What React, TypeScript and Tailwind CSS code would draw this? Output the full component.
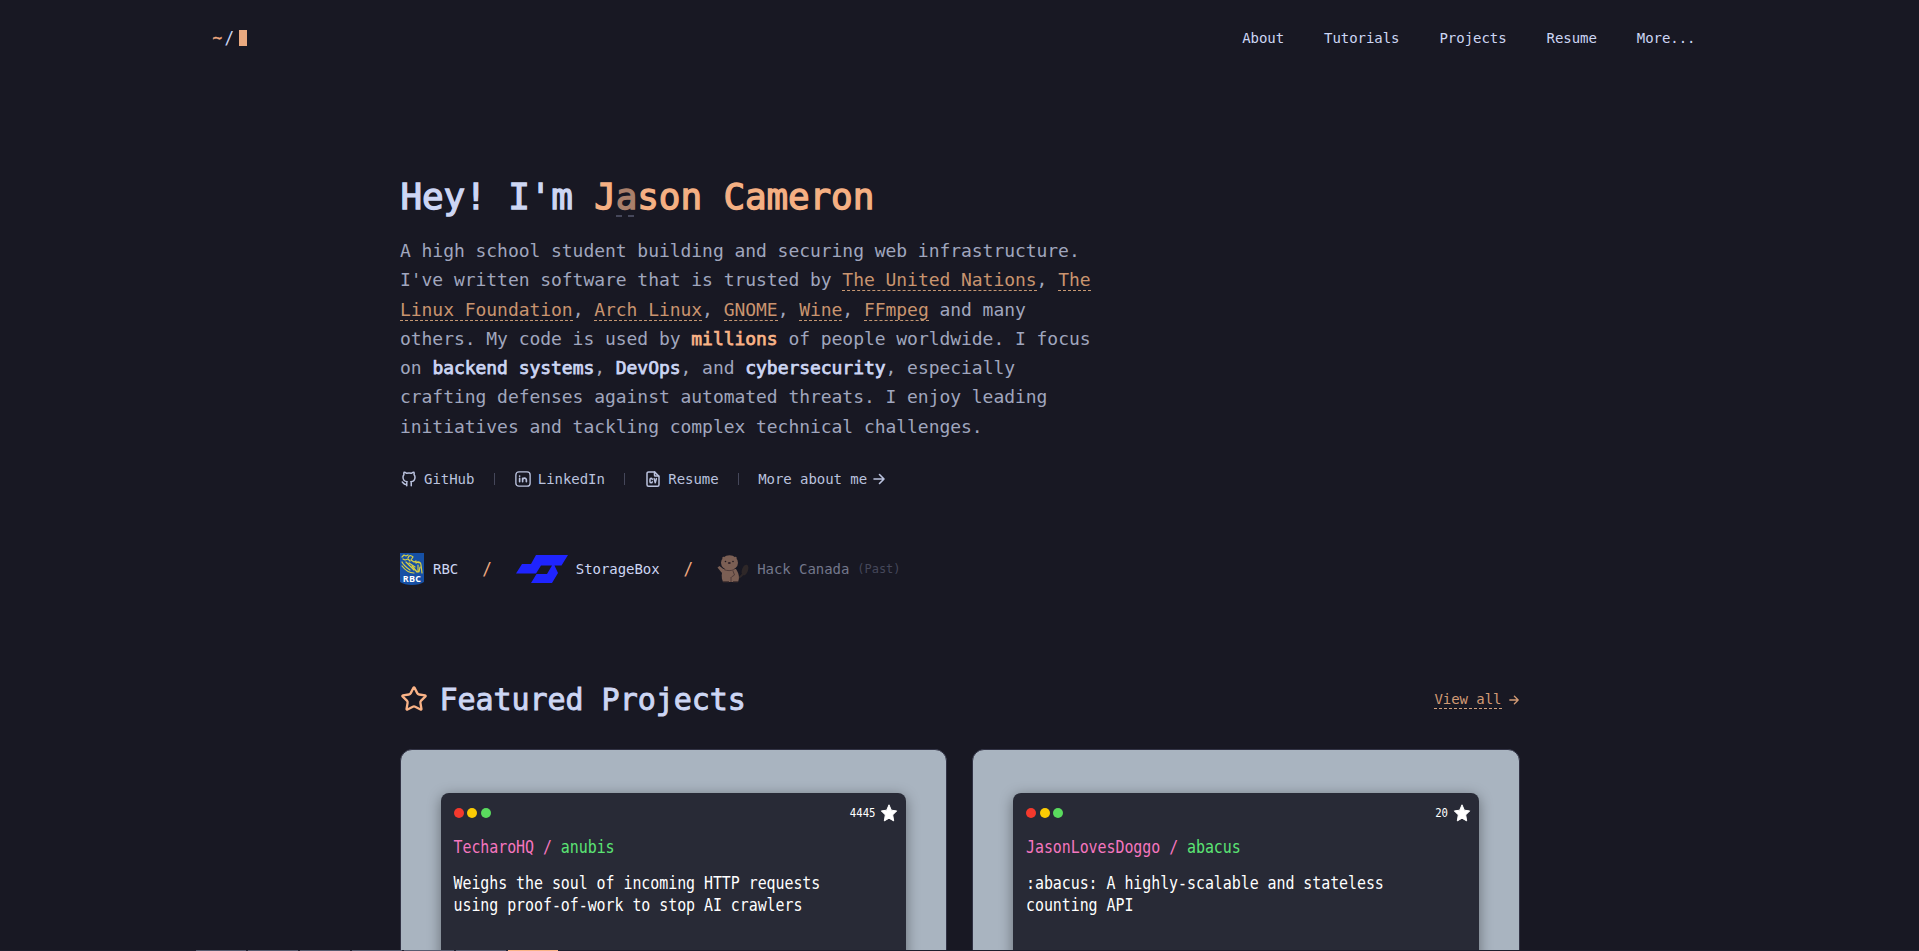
import React from "react";
import { Star } from "lucide-react";
import { TbBrandGithub } from "react-icons/tb";

const stroke = {
  viewBox: "0 0 24 24",
  fill: "none",
  stroke: "currentColor",
  strokeLinecap: "round" as const,
  strokeLinejoin: "round" as const,
};

function Arrow({ className }: { className: string }) {
  return (
    <svg viewBox="0 0 12 12" fill="none" stroke="currentColor" strokeLinecap="round" strokeLinejoin="round" className={className}>
      <path d="M1 6h10M6.500 1.500L11 6l-4.500 4.500" strokeWidth="1.600" />
    </svg>
  );
}

function LinkedInIcon() {
  return (
    <svg {...stroke} strokeWidth="1.800" className="size-[18px]">
      <rect x="2.500" y="2.500" width="19" height="19" rx="4" />
      <path strokeWidth="2.200" d="M7.500 11v4.500M7.500 8v.2M11.500 15.500V11M11.500 13.200c0-3 5-3.400 5 0v2.300" />
    </svg>
  );
}

function CvIcon() {
  return (
    <svg {...stroke} strokeWidth="2" className="size-[18px]">
      <path d="M14 2.500v4.500a1 1 0 0 0 1 1h4.500" />
      <path d="M18 21.500H6a2 2 0 0 1-2-2v-15a2 2 0 0 1 2-2h8l6 6v11a2 2 0 0 1-2 2z" />
      <path d="M11 12.500a1.500 1.500 0 0 0-3 0v3a1.500 1.500 0 0 0 3 0M13.500 11.500l1.500 5.500 1.500-5.500" />
    </svg>
  );
}

function RbcLogo() {
  return (
    <svg viewBox="0 0 24 32" className="h-8 w-6">
      <path d="M0 0h24v29c-3 2-7 3-12 3s-9-1-12-3z" fill="#1650a5" />
      <g fill="none" stroke="#d9d043" strokeWidth="1.200" strokeLinecap="round" strokeLinejoin="round">
        <path d="M2 4l2-2 2 1 2-1M3 6l2 1 3-1 2 2M2 9c2 4 5 6 8 8M2 13c3 4 7 7 12 7M6 9l8 8M9 10l6 4" />
        <path d="M8 5c1-3 3-3 5-1l-2 3 3 2 2-1M16 10c2-2 5-1 5 2l1 8M18 12v7M15 9l5 1M20 14l-1 5M12 13l5 6" />
      </g>
      <text x="12" y="29" textAnchor="middle" fill="#fff" fontFamily="Open Sans, sans-serif" fontSize="9" fontWeight="700" letterSpacing=".3">RBC</text>
    </svg>
  );
}

function StorageBoxLogo() {
  return (
    <svg viewBox="0 0 52 28" className="h-7 w-[52px]" fill="#1f24ff">
      <path d="M20 0H52L45.500 10.500H38.500L42 18L36 28H15L20.500 19H31L36 10.500H25L20 18.500H0L6 9H15z" />
    </svg>
  );
}

function BeaverLogo() {
  return (
    <svg viewBox="0 0 32 28" className="h-7 w-8">
      <ellipse cx="28" cy="15" rx="3" ry="5.500" transform="rotate(20 28 15)" fill="#2e2728" />
      <path d="M21 23q3-1 5-4" stroke="#2e2728" strokeWidth="2" fill="none" />
      <path d="M7 14.500L2.500 11 .5 12.500l4 5 5 1z" fill="#7b5f54" />
      <path d="M6 14h13c2.500 4 4 8 2 13H6c-2-4-1.500-9 0-13z" fill="#7b5f54" />
      <ellipse cx="12.500" cy="7.800" rx="8.500" ry="7.500" fill="#7b5f54" />
      <circle cx="6.500" cy="3" r="1.200" fill="#7b5f54" />
      <circle cx="18.500" cy="3" r="1.200" fill="#7b5f54" />
      <path d="M7 14.500c3 1.500 7 1.500 10.500 0M16 16l1.500 4-3 2M14 22v5" fill="none" stroke="#4a3736" strokeWidth=".9" />
      <circle cx="8.500" cy="6.500" r=".8" fill="#211a20" />
      <circle cx="16" cy="6.500" r=".8" fill="#211a20" />
      <ellipse cx="12.300" cy="8" rx="1.500" ry="1" fill="#33252a" />
      <path d="M6 26.700h6M16 26.700h5" stroke="#493735" strokeWidth="1.200" />
    </svg>
  );
}

function Bar() {
  return <span className="h-3 w-px bg-[#45475a]" />;
}

function Ref({ children }: { children: React.ReactNode }) {
  return <a className="border-b border-dashed border-[#c79873] text-[#c9946f]">{children}</a>;
}

function Strong({ children }: { children: React.ReactNode }) {
  return <strong className="font-normal text-[#cdd6f4] [-webkit-text-stroke:0.75px_currentColor]">{children}</strong>;
}

type Project = { stars: string; owner: string; name: string; lines: string[] };

const projects: Project[] = [
  { stars: "4445", owner: "TecharoHQ", name: "anubis", lines: ["Weighs the soul of incoming HTTP requests", "using proof-of-work to stop AI crawlers"] },
  { stars: "20", owner: "JasonLovesDoggo", name: "abacus", lines: [":abacus: A highly-scalable and stateless", "counting API"] },
];

function ProjectCard({ project }: { project: Project }) {
  return (
    <article className="h-80 overflow-hidden rounded-xl border border-[#313244] bg-[#a9b4c0] px-10 pt-[43px]">
      <div className="h-72 rounded-lg bg-[#282a36] px-[13px] pt-[10px] text-white shadow-[0_3px_14px_rgba(0,0,0,0.4)]">
        <div className="flex h-5 items-center gap-[3.600px]">
          <span className="size-[10px] rounded-full bg-[#f4392d]" />
          <span className="size-[10px] rounded-full bg-[#fbcb04]" />
          <span className="size-[10px] rounded-full bg-[#5adb5e]" />
          <span className="mr-px ml-auto origin-center scale-y-[1.18] text-[10.700px]">{project.stars}</span>
          <svg viewBox="0 0 18 18" className="-mr-[5px] size-[18px]" fill="#fff" stroke="#fff" strokeLinejoin="round">
            <path d="M9 .8l2.300 5.400 5.400.7-4 4 1 6L9 14.200l-4.700 2.700 1-6-4-4 5.400-.7z" />
          </svg>
        </div>
        <div className="mt-3 origin-center scale-y-[1.12] text-[14.940px] leading-6 whitespace-pre">
          <span className="text-[#f576bf]">{project.owner} / </span>
          <span className="text-[#5be474]">{project.name}</span>
        </div>
        <div className="mt-[13px]">
          {project.lines.map((line) => (
            <p key={line} className="origin-center scale-y-[1.12] text-[14.940px] leading-[22px] whitespace-pre">{line}</p>
          ))}
        </div>
      </div>
    </article>
  );
}

const tabs = [0, 1, 2, 3, 4, 5, 6];

export default function App() {
  return (
    <div className="relative h-[951px] overflow-hidden bg-[#181823] font-['DejaVu_Sans_Mono',monospace] tracking-[-0.003em] text-[#cdd6f4]">
      <header className="mx-auto flex h-[76px] w-[1536px] items-center justify-between pr-8 pl-[21px] text-sm">
        <div className="flex items-center text-base">
          <span className="w-3 text-[#efa980] [-webkit-text-stroke:0.4px_currentColor]">~</span>
          <span className="w-[14px] scale-y-[1.1]">/</span>
          <span className="h-4 w-2 bg-[#e9a97f]" />
        </div>
        <nav className="flex gap-10">
          <a>About</a>
          <a>Tutorials</a>
          <a>Projects</a>
          <a>Resume</a>
          <a>More...</a>
        </nav>
      </header>
      <main className="mx-auto w-[1120px] pt-[98px]">
        <h1 className="pl-px text-4xl leading-[45px] font-normal tracking-[-0.004em] [-webkit-text-stroke:1.300px_currentColor]">
          Hey! I'm <span className="text-[#f5b083]">J<span className="relative inline-block leading-[40px] text-[#aa806b]">a<span className="absolute bottom-0 left-0 flex w-[22px] justify-between"><i className="h-[2px] w-1.5 bg-[#45475a]" /><i className="mr-1 h-[2px] w-1.5 bg-[#45475a]" /></span></span>son Cameron</span>
        </h1>
        <p className="mt-[17px] pl-[0.5px] text-lg leading-[29.250px] whitespace-nowrap text-[#a0a6be]">
          A high school student building and securing web infrastructure.<br />
          I've written software that is trusted by <Ref>The United Nations</Ref>, <Ref>The</Ref><br />
          <Ref>Linux Foundation</Ref>, <Ref>Arch Linux</Ref>, <Ref>GNOME</Ref>, <Ref>Wine</Ref>, <Ref>FFmpeg</Ref> and many<br />
          others. My code is used by <b className="font-normal text-[#fab387] [-webkit-text-stroke:0.75px_currentColor]">millions</b> of people worldwide. I focus<br />
          on <Strong>backend systems</Strong>, <Strong>DevOps</Strong>, and <Strong>cybersecurity</Strong>, especially<br />
          crafting defenses against automated threats. I enjoy leading<br />
          initiatives and tackling complex technical challenges.
        </p>
        <div className="mt-[26px] flex h-6 items-center gap-[19.250px] pl-[0.5px] text-sm text-[#bac2de]">
          <a className="flex items-center gap-1.5"><TbBrandGithub className="size-[18px]" />GitHub</a>
          <Bar />
          <a className="flex items-center gap-1.5"><LinkedInIcon />LinkedIn</a>
          <Bar />
          <a className="flex items-center gap-1.5"><CvIcon />Resume</a>
          <Bar />
          <a className="flex items-center gap-1.5">More about me<Arrow className="size-3" /></a>
        </div>
        <div className="mt-[62px] flex h-8 items-center pl-[0.5px] text-sm">
          <RbcLogo /><span className="ml-[9px]">RBC</span>
          <span className="mx-6 scale-y-[1.150] text-base text-[#efa980]">/</span>
          <StorageBoxLogo /><span className="ml-2">StorageBox</span>
          <span className="mx-6 scale-y-[1.150] text-base text-[#efa980]">/</span>
          <BeaverLogo /><span className="ml-2 text-[#73778b]">Hack Canada</span>
          <span className="ml-2 text-xs text-[#45475a]">(Past)</span>
        </div>
        <div className="mt-[91px] flex h-12 items-center">
          <Star className="-mt-px size-7 text-[#fab387]" />
          <h2 className="ml-3 text-3xl font-normal [-webkit-text-stroke:0.900px_currentColor]">Featured Projects</h2>
          <a className="ml-auto flex items-center gap-[7px] text-sm text-[#d19a75]">
            <span className="border-b border-dashed border-[#d1a17d] leading-[18px]">View all</span>
            <Arrow className="mr-px size-2.5" />
          </a>
        </div>
        <section className="mt-[25px] grid grid-cols-2 gap-[25px]">
          {projects.map((project) => <ProjectCard key={project.name} project={project} />)}
        </section>
      </main>
      <div className="absolute bottom-0 left-0 flex h-px w-full gap-[2px] bg-[#1e1e2e] pl-[196px]">
        {tabs.map((tab) => <span key={tab} className="h-px w-[50px] bg-[#585b70] last:bg-[#fab387]" />)}
      </div>
    </div>
  );
}
